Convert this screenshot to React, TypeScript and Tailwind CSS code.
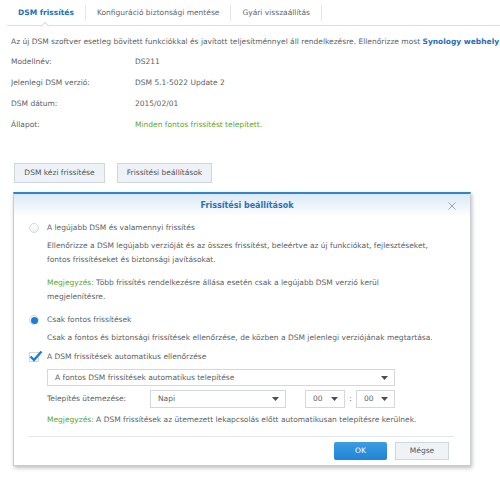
import React from "react";

const font = { fontFamily: '"DejaVu Sans", Verdana, sans-serif' };

function Caret() {
  return (
    <svg width="7" height="4" viewBox="0 0 7 4" className="shrink-0">
      <path d="M0 0 L7 0 L3.5 4 Z" fill="#4a4f55" />
    </svg>
  );
}

function Select({ value, className }: { value: string; className: string }) {
  return (
    <div
      className={`flex items-center justify-between border border-[#d3d8de] bg-white pl-[7px] pr-[6px] text-[#5a5f66] ${className}`}
    >
      <span>{value}</span>
      <Caret />
    </div>
  );
}

function Radio({ checked }: { checked?: boolean }) {
  return (
    <div className="w-[10px] h-[10px] rounded-full border border-[#d2d8de] bg-gradient-to-b from-white to-[#eef1f4] flex items-center justify-center shrink-0">
      {checked && <div className="w-[7px] h-[7px] rounded-full bg-[#1b7ed3]" />}
    </div>
  );
}

function Checkbox() {
  return (
    <div className="relative w-[10px] h-[10px] border border-[#d2d8de] bg-white shrink-0">
      <svg width="14" height="12" viewBox="0 0 14 12" className="absolute -left-[1px] -top-[3px]">
        <path d="M1.5 6.5 L5 10 L12.5 1.5" stroke="#1b7ed3" strokeWidth="2.4" fill="none" />
      </svg>
    </div>
  );
}

export default function App() {
  const tabs = ["DSM frissítés", "Konfiguráció biztonsági mentése", "Gyári visszaállítás"];
  const rows: [string, string, boolean?][] = [
    ["Modellnév:", "DS211"],
    ["Jelenlegi DSM verzió:", "DSM 5.1-5022 Update 2"],
    ["DSM dátum:", "2015/02/01"],
    ["Állapot:", "Minden fontos frissítést telepített.", true],
  ];
  return (
    <div style={font} className="w-[500px] h-[491px] bg-white overflow-hidden text-[7.5px] leading-[14px] text-[#5a5f65]">
      {/* tabs */}
      <div className="relative ml-[7px] h-[26px] flex items-center border-b border-[#d9dee3]">
        {tabs.map((t, i) => (
          <div key={t} className="flex items-center h-full">
            <div
              className={`px-[11px] ${i === 0 ? "font-bold text-[#2170b4]" : "text-[#5f656b]"}`}
            >
              {t}
            </div>
            <div className="w-px h-[16px] bg-[#e1e5e9]" />
          </div>
        ))}
        <div className="absolute left-[35px] -bottom-[4px] w-[6px] h-[6px] rotate-45 bg-white border-l border-t border-[#d9dee3]" />
      </div>

      {/* intro */}
      <div className="mt-[9px] pl-[11px] whitespace-nowrap">
        Az új DSM szoftver esetleg bövített funkciókkal és javított teljesítménnyel áll rendelkezésre. Ellenőrizze most{" "}
        <span className="font-bold text-[#1d6fb7]">Synology webhely</span>
      </div>

      <div className="mt-[2px] pl-[11px]">
        {rows.map(([k, v, g]) => (
          <div key={k} className="flex items-center h-[21px]">
            <div className="w-[124px]">{k}</div>
            <div className={g ? "text-[#5aa631]" : ""}>{v}</div>
          </div>
        ))}
      </div>

      {/* buttons */}
      <div className="mt-[28px] ml-[14px] flex gap-[12px]">
        <div className="w-[91px] h-[20px] flex items-center justify-center border border-[#cfd6dd] bg-[#eef2f6] text-[#4f555b]">
          DSM kézi frissítése
        </div>
        <div className="w-[95px] h-[20px] flex items-center justify-center border border-[#cfd6dd] bg-[#eef2f6] text-[#4f555b]">
          Frissítési beállítások
        </div>
      </div>

      {/* dialog */}
      <div className="mt-[9px] ml-[13px] w-[458px] h-[274px] bg-white border border-[#c9cdd2] border-t-2 border-t-[#2d86cc] shadow-[1px_2px_4px_rgba(0,0,0,0.25)] flex flex-col">
        <div className="relative h-[23px] flex items-center justify-center bg-gradient-to-b from-[#dbe9f6] to-white">
          <span className="font-bold text-[#2a72b5] text-[8px] ml-[10px]">Frissítési beállítások</span>
          <svg width="8" height="8" viewBox="0 0 8 8" className="absolute right-[14px] top-[8px]">
            <path d="M0.5 0.5 L7.5 7.5 M7.5 0.5 L0.5 7.5" stroke="#9aa2aa" strokeWidth="1" />
          </svg>
        </div>

        <div className="pl-[15px] pr-[16px] flex flex-col">
          <div className="mt-[4px] flex items-center gap-[8px] h-[14px]">
            <Radio />
            <span>A legújabb DSM és valamennyi frissítés</span>
          </div>
          <div className="mt-[4px] ml-[18px]">
            Ellenőrizze a DSM legújabb verzióját és az összes frissítést, beleértve az új funkciókat, fejlesztéseket,
            <br />
            fontos frissítéseket és biztonsági javításokat.
          </div>
          <div className="mt-[9px] ml-[18px]">
            <span className="text-[#5aa631]">Megjegyzés:</span> Több frissítés rendelkezésre állása esetén csak a legújabb DSM verzió kerül
            <br />
            megjelenítésre.
          </div>
          <div className="mt-[9px] flex items-center gap-[8px] h-[14px]">
            <Radio checked />
            <span>Csak fontos frissítések</span>
          </div>
          <div className="mt-[4px] ml-[18px]">
            Csak a fontos és biztonsági frissítések ellenőrzése, de közben a DSM jelenlegi verziójának megtartása.
          </div>
          <div className="mt-[5px] flex items-center gap-[8px] h-[14px]">
            <Checkbox />
            <span>A DSM frissítések automatikus ellenőrzése</span>
          </div>
          <Select
            value="A fontos DSM frissítések automatikus telepítése"
            className="mt-[5px] ml-[18px] w-[348px] h-[17px]"
          />
          <div className="mt-[4px] ml-[18px] flex items-center h-[18px]">
            <div className="w-[103px]">Telepítés ütemezése:</div>
            <Select value="Napi" className="w-[136px] h-[18px]" />
            <Select value="00" className="ml-[19px] w-[40px] h-[18px]" />
            <span className="w-[11px] text-center">:</span>
            <Select value="00" className="w-[39px] h-[18px]" />
          </div>
          <div className="mt-[5px] ml-[18px]">
            <span className="text-[#5aa631]">Megjegyzés:</span> A DSM frissítések az ütemezett lekapcsolás előtt automatikusan telepítésre kerülnek.
          </div>
          <div className="mt-[9px] -ml-[1px] h-px bg-[#e3e6ea]" />
          <div className="mt-[5px] flex justify-end gap-[8px] pr-[5px]">
            <div className="w-[53px] h-[18px] flex items-center justify-center rounded-[2px] bg-gradient-to-b from-[#3c9de3] to-[#1f84d2] text-white">
              OK
            </div>
            <div className="w-[54px] h-[18px] flex items-center justify-center border border-[#cfd6dd] bg-[#eff3f6] text-[#4f555b]">
              Mégse
            </div>
          </div>
        </div>
      </div>
    </div>
  );
}
